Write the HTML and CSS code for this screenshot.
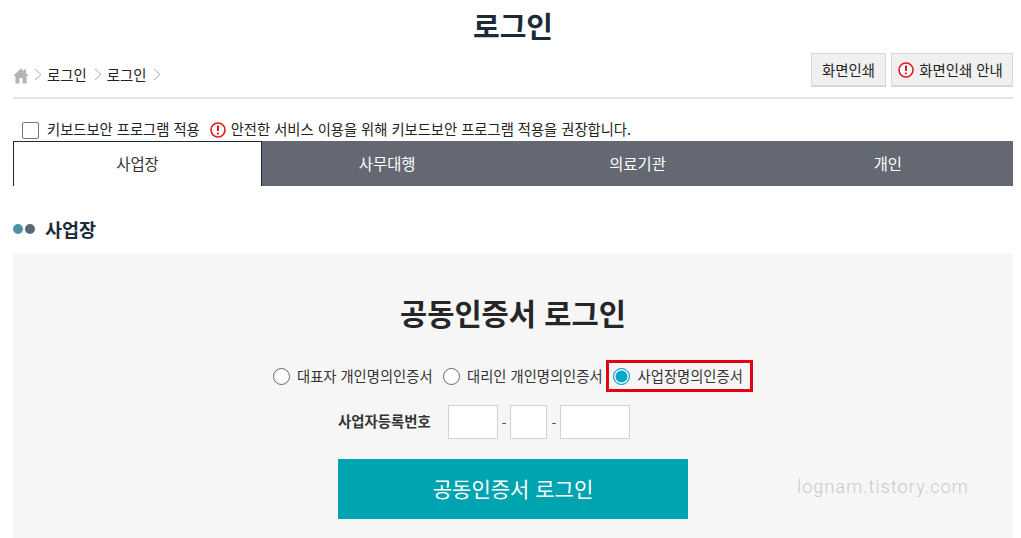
FILE: index.html
```html
<!DOCTYPE html>
<html lang="ko">
<head>
<meta charset="utf-8">
<title>로그인</title>
<link rel="stylesheet" href="styles.css">
</head>
<body>
<div class="page">
  <h1 class="title">로그인</h1>
  <div class="topbar">
    <nav class="crumbs">
      <svg class="home" width="16" height="16" viewBox="0 0 16 16"><path d="M8 .5 0 8h2.400v7.500h4V10h3.200v5.500h4V8H16l-3-2.800V1.500h-2v1.800z" fill="#b4b4b4"/></svg>
      <svg class="chev" width="8" height="13" viewBox="0 0 8 13"><path d="M1 1l6 5.500-6 5.500" fill="none" stroke="#aaa"/></svg>
      <span class="crumb">로그인</span>
      <svg class="chev" width="8" height="13" viewBox="0 0 8 13"><path d="M1 1l6 5.500-6 5.500" fill="none" stroke="#aaa"/></svg>
      <span class="crumb">로그인</span>
      <svg class="chev" width="8" height="13" viewBox="0 0 8 13"><path d="M1 1l6 5.500-6 5.500" fill="none" stroke="#aaa"/></svg>
    </nav>
    <div class="tools">
      <button class="tool">화면인쇄</button>
      <button class="tool tool-info">
        <svg width="16" height="16" viewBox="0 0 16 16"><circle cx="8" cy="8" r="7" fill="#fff" stroke="#e8141c" stroke-width="1.600"/><path d="M8 3.500v5.500" stroke="#e8141c" stroke-width="2"/><circle cx="8" cy="11.500" r="1.100" fill="#e8141c"/></svg>
        화면인쇄 안내
      </button>
    </div>
  </div>
  <div class="keyboard">
    <span class="check"></span>
    <span class="kb-label">키보드보안 프로그램 적용</span>
    <svg class="kb-icon" width="16" height="16" viewBox="0 0 16 16"><circle cx="8" cy="8" r="7" fill="#fff" stroke="#e8141c" stroke-width="1.600"/><path d="M8 3.500v5.500" stroke="#e8141c" stroke-width="2"/><circle cx="8" cy="11.500" r="1.100" fill="#e8141c"/></svg>
    <span>안전한 서비스 이용을 위해 키보드보안 프로그램 적용을 권장합니다.</span>
  </div>
  <div class="tabs">
    <div class="tab active">사업장</div>
    <div class="tab">사무대행</div>
    <div class="tab">의료기관</div>
    <div class="tab">개인</div>
  </div>
  <h2 class="section"><span class="dot dot-a"></span><span class="dot dot-b"></span><span class="section-text">사업장</span></h2>
  <section class="panel">
    <h3 class="panel-title">공동인증서 로그인</h3>
    <div class="radios">
      <label class="radio"><span class="circle"></span><span class="radio-text">대표자 개인명의인증서</span></label>
      <label class="radio"><span class="circle"></span><span class="radio-text">대리인 개인명의인증서</span></label>
      <label class="radio selected"><span class="circle on"></span><span class="radio-text">사업장명의인증서</span></label>
    </div>
    <div class="bizno">
      <span class="bizno-label">사업자등록번호</span>
      <span class="box w50"></span><span class="dash">-</span><span class="box w37"></span><span class="dash">-</span><span class="box w70"></span>
    </div>
    <div class="submit"><span class="submit-text">공동인증서 로그인</span></div>
    <div class="mark">lognam.tistory.com</div>
  </section>
</div>
</body>
</html>
```
FILE: styles.css
```css
* { box-sizing: border-box; }
html, body { margin: 0; height: 538px; overflow: hidden; background: #fff; }
body { font-family: "Noto Sans CJK KR", "Noto Sans", sans-serif; color: #222; }
.page { width: 1000px; margin-left: 13px; }
.title { margin: 0; height: 53px; padding-top: 4px; text-align: center; font-size: 29px; line-height: 42px; font-weight: 700; color: #1d2a3a; }
.topbar { height: 46px; display: flex; justify-content: space-between; align-items: flex-start; border-bottom: 2px solid #e2e2e2; }
.crumbs { display: flex; align-items: center; height: 43px; font-size: 14.400px; color: #222; }
.home { margin-right: 5px; margin-top: 2px; }
.chev { margin-right: 5px; }
.crumb { margin-right: 7px; }
.tools { display: flex; gap: 5px; }
.tool { height: 34px; padding: 0; border: 1px solid #d6d6d6; border-bottom-width: 2px; background: #f0f0f0; font: inherit; font-size: 14.400px; color: #222; display: flex; align-items: center; justify-content: center; gap: 5px; width: 75px; }
.tool-info { width: 122px; padding-right: 3px; }
.keyboard { height: 42px; padding: 18px 0 0 9px; display: flex; align-items: center; font-size: 14.300px; line-height: 18px; }
.check { width: 17px; height: 17px; border: 1px solid #767676; border-radius: 2px; background: #fff; margin-right: 8px; margin-top: 2px; }
.kb-label { margin-right: 10px; }
.kb-icon { margin-right: 5px; margin-top: 2px; }
.tabs { display: flex; height: 45px; background: #646872; }
.tab { flex: 1 1 0; display: flex; align-items: center; justify-content: center; color: #fff; font-size: 15.400px; padding-bottom: 2px; }
.tab.active { flex: 0 0 249px; background: #fff; color: #333; border: 1px solid #1d2a3a; border-bottom: 0; }
.section { margin: 0; height: 67px; display: flex; align-items: center; font-size: 18.500px; font-weight: 700; color: #1d2a3a; padding-top: 18px; }
.dot { width: 10px; height: 10px; border-radius: 50%; margin-right: 2px; }
.dot-a { background: #4d939e; }
.dot-b { background: #566a76; }
.section-text { margin-left: 8px; }
.panel { position: relative; height: 285px; background: #f6f6f6; }
.panel-title { margin: 0; padding-top: 38px; height: 99px; text-align: center; font-size: 29.600px; line-height: 44px; font-weight: 700; color: #262626; }
.radios { height: 53px; padding: 0 0 5px 260px; display: flex; align-items: center; font-size: 14.300px; color: #333; }
.radio { display: flex; align-items: center; height: 32px; margin-right: 10.500px; }
.radio-text { margin-top: -2px; }
.radio:nth-child(2) { margin-right: 3px; }
.selected { border: 3px solid #e60012; padding-left: 4px; width: 147.500px; margin-right: 0; }
.circle { width: 17px; height: 17px; border: 1px solid #666; border-radius: 50%; background: #fff; margin-right: 7px; flex: none; }
.circle.on { border: 1px solid #1f8fe0; background: #00a9c6; box-shadow: inset 0 0 0 1.500px #fff; margin-right: 8px; }
.bizno { height: 34px; padding-left: 325px; display: flex; align-items: center; }
.bizno-label { width: 110px; font-size: 14.400px; font-weight: 700; color: #333; padding-bottom: 3px; }
.box { height: 34px; background: #fff; border: 1px solid #d2d2d2; }
.w50 { width: 50px; }
.w37 { width: 37px; margin-right: 1px; }
.w70 { width: 70px; }
.dash { width: 12px; text-align: center; font-size: 13px; color: #444; }
.submit { margin: 20px 0 0 325px; width: 350px; height: 60px; background: #00a4b0; color: #fff; display: flex; align-items: center; justify-content: center; font-size: 21px; }
.submit-text { margin-top: -2px; }
.mark { position: absolute; left: 784px; top: 222px; font-family: Roboto, sans-serif; font-size: 18px; font-weight: 300; letter-spacing: 1.100px; color: #c9c9c9; line-height: 24px; }
```
